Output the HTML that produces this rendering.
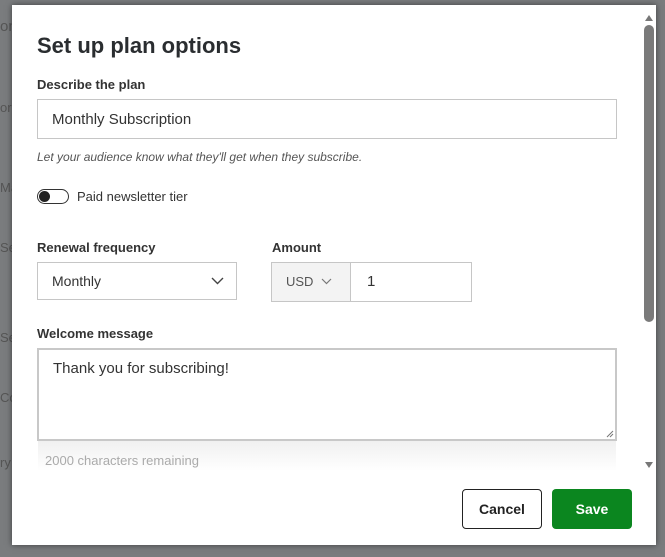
<!DOCTYPE html>
<html><head><style>
*{box-sizing:border-box;margin:0;padding:0}
body{width:665px;height:557px;background:#7a7c7e;font-family:"Liberation Sans",sans-serif;color:#222;position:relative;overflow:hidden}
.bgtext{position:absolute;left:0;color:#555;font-size:13px}
.dlg{position:absolute;left:12px;top:5px;width:644px;height:540px;background:#fff;box-shadow:0 0 6px rgba(0,0,0,.5)}
.abs{position:absolute}
h1{position:absolute;left:25px;top:28px;font-size:22px;font-weight:bold;color:#2a2d30}
.lbl{position:absolute;font-size:13px;font-weight:bold;color:#333}
.box{position:absolute;border:1px solid #c6c6c6;background:#fff;font-size:15px;color:#333}
.sb{position:absolute;left:631px;top:10px;width:12px;height:460px}
</style></head><body>
<div class="bgtext" style="top:18px;font-size:15px">on</div>
<div class="bgtext" style="top:100px">or</div>
<div class="bgtext" style="top:180px">Ma</div>
<div class="bgtext" style="top:240px">Se</div>
<div class="bgtext" style="top:330px">Se</div>
<div class="bgtext" style="top:390px">Co</div>
<div class="bgtext" style="top:455px">ry</div>
<div class="dlg">
<h1>Set up plan options</h1>
<div class="lbl" style="left:25px;top:72px">Describe the plan</div>
<div class="box" style="left:25px;top:94px;width:580px;height:40px;padding:11px 14px">Monthly Subscription</div>
<div class="abs" style="left:25px;top:145px;font-size:12px;font-style:italic;color:#555">Let your audience know what they'll get when they subscribe.</div>
<div class="abs" style="left:25px;top:184px;width:32px;height:15px;border:1px solid #333;border-radius:8px"><div style="position:absolute;left:1px;top:1px;width:11px;height:11px;border-radius:50%;background:#222"></div></div>
<div class="abs" style="left:65px;top:184px;font-size:13px;color:#333">Paid newsletter tier</div>
<div class="lbl" style="left:25px;top:235px;font-weight:bold">Renewal frequency</div>
<div class="lbl" style="left:260px;top:235px">Amount</div>
<div class="box" style="left:25px;top:257px;width:200px;height:38px;padding:10px 14px;font-size:14px">Monthly
<svg style="position:absolute;right:12px;top:14px" width="13" height="8" viewBox="0 0 13 8"><path d="M1 1l5.5 5.5L12 1" fill="none" stroke="#444" stroke-width="1.4"/></svg></div>
<div class="box" style="left:259px;top:257px;width:201px;height:40px;background:#fff">
<div style="position:absolute;left:0;top:0;width:79px;height:38px;background:#f3f3f3;border-right:1px solid #c6c6c6;padding:11px 14px;font-size:13px;color:#555">USD
<svg style="position:absolute;left:49px;top:15px" width="11" height="7" viewBox="0 0 11 7"><path d="M1 1l4.5 4.5L10 1" fill="none" stroke="#777" stroke-width="1.2"/></svg></div>
<div style="position:absolute;left:95px;top:10px;font-size:15px">1</div></div>
<div class="lbl" style="left:25px;top:321px">Welcome message</div>
<div class="box" style="left:25px;top:343px;width:580px;height:93px;border:2px solid #c8c8c8;padding:10px 14px">Thank you for subscribing!
<svg style="position:absolute;right:1px;bottom:1px" width="8" height="8"><path d="M7 1L1 7M7 4L4 7" stroke="#777"/></svg></div>
<div class="abs" style="left:26px;top:436px;width:578px;height:30px;background:linear-gradient(#f0f0f0,#fff);font-size:13px;color:#aaa;padding:12px 7px 0">2000 characters remaining</div>
<div class="sb"><div style="position:absolute;left:2px;top:0;width:0;height:0;border-left:4px solid transparent;border-right:4px solid transparent;border-bottom:6px solid #777"></div>
<div style="position:absolute;left:1px;top:10px;width:10px;height:297px;border-radius:5px;background:#7a7a7a"></div>
<div style="position:absolute;left:2px;top:447px;width:0;height:0;border-left:4px solid transparent;border-right:4px solid transparent;border-top:6px solid #777"></div></div>
<div class="abs" style="left:450px;top:484px;width:80px;height:40px;border:1px solid #222;border-radius:4px;text-align:center;line-height:38px;font-size:14px;font-weight:bold;color:#222">Cancel</div>
<div class="abs" style="left:540px;top:484px;width:80px;height:40px;background:#0b861f;border-radius:4px;text-align:center;line-height:40px;font-size:14px;font-weight:bold;color:#fff">Save</div>
</div>
</body></html>
